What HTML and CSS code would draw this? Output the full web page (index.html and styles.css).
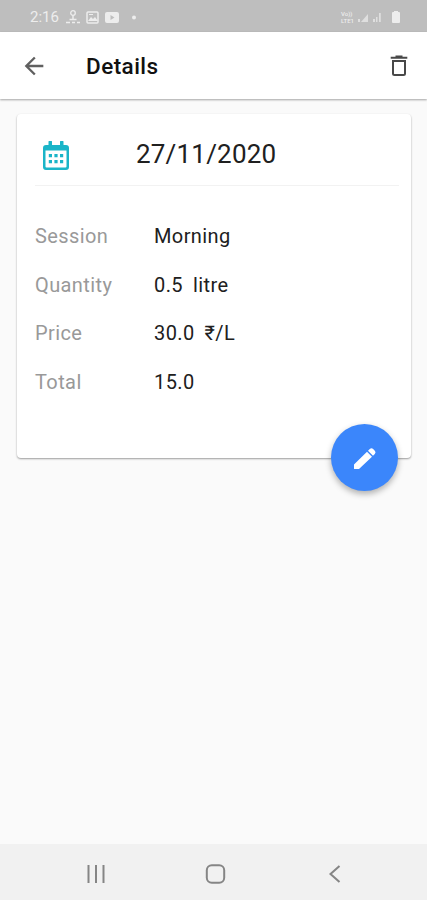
FILE: index.html
```html
<!DOCTYPE html>
<html lang="en">
<head>
<meta charset="utf-8">
<meta name="viewport" content="width=device-width, initial-scale=1">
<title>Details</title>
<link rel="stylesheet" href="styles.css">
</head>
<body>
<div class="screen">
  <header class="status">
    <span class="clock">2:16</span>
    <svg class="notices" width="76" height="16" viewBox="0 0 76 16" fill="none" stroke="currentColor">
      <circle cx="8" cy="4" r="2.3" stroke-width="1.3"/>
      <path d="M8 6.500v4M4.500 10.500h7M1 13.500h4M7 13.500h3M12 13.500h3" stroke-width="1.5"/>
      <rect x="22" y="3" width="11" height="11" rx="1" stroke-width="1.5"/>
      <path d="M23 12l3-4 2 2 2-2 3 4zM24 5h4v1h-4z" fill="currentColor" stroke="none"/>
      <path fill-rule="evenodd" d="M42 3h10q2 0 2 2v7q0 2-2 2h-10q-2 0-2-2v-7q0-2 2-2zM45.500 6v5l4-2.500z" fill="currentColor" stroke="none"/>
      <circle cx="69" cy="8.500" r="2" fill="currentColor" stroke="none"/>
    </svg>
    <span class="network"><span>Vo))</span><span>LTE1</span></span>
    <svg class="signals" width="46" height="16" viewBox="0 0 46 16" fill="currentColor">
      <path d="M1 13v-3h2v3zM4 13l7-8v8zM16 13v-3h2v3zM19 13V8h1.500v5zM22 13V4h1.800v9z" opacity=".7"/>
      <path d="M36 3h1V2h4v1h1q1 0 1 1v9q0 1-1 1h-6q-1 0-1-1V4q0-1 1-1z"/>
    </svg>
  </header>
  <div class="toolbar">
    <svg class="back" width="28" height="28" viewBox="0 0 24 24" fill="#606060"><path d="M20 11H7.830l5.590-5.590L12 4l-8 8 8 8 1.410-1.410L7.830 13H20z"/></svg>
    <h1>Details</h1>
    <svg class="trash" width="28" height="28" viewBox="0 0 28 28" fill="none" stroke="#484848" stroke-width="2">
      <path d="M5.700 5.800h16.600M10.500 4.600h7M8 9h12v12.500q0 1.500-1.500 1.500h-9Q8 23 8 21.500z"/>
    </svg>
  </div>
  <main>
    <section class="card">
      <div class="date-row">
        <svg class="calendar" width="28" height="32" viewBox="0 0 28 32" fill="#1ab5c8">
          <path fill-rule="evenodd" d="M6.500 1.500q0-.5.500-.5h2.500q.5 0 .5.500V5h8V1.500q0-.5.500-.5H21q.5 0 .5.500V5H24q3 0 3 3v19q0 3-3 3H4q-3 0-3-3V8q0-3 3-3h2.500zM3.500 10.500v16q0 1 1 1h19q1 0 1-1v-16z"/>
          <path d="M6.800 14h3.200v3.200H6.800zM12.400 14h3.200v3.200h-3.200zM18 14h3.200v3.200H18zM6.800 20h3.200v3.200H6.800zM12.400 20h3.200v3.200h-3.200zM18 20h3.200v3.200H18z"/>
        </svg>
        <span class="date">27/11/2020</span>
      </div>
      <dl>
        <dt>Session</dt><dd>Morning</dd>
        <dt>Quantity</dt><dd>0.5<span class="unit">litre</span></dd>
        <dt>Price</dt><dd>30.0<span class="unit">₹/L</span></dd>
        <dt>Total</dt><dd>15.0</dd>
      </dl>
      <button class="edit" aria-label="Edit">
        <svg width="28" height="28" viewBox="0 0 28 28" fill="#fff"><path d="M3 20.500L16 7.800l5 5L8 25H3.500Q3 25 3 24.500zM17 6.800l1.800-1.800q1.700-1.500 3.300 0l1.700 1.700q1.500 1.600 0 3.300L22 11.800z"/></svg>
      </button>
    </section>
  </main>
  <nav>
    <svg width="24" height="24" viewBox="0 0 24 24"><path d="M4.500 3v18M12 3v18M19.500 3v18"/></svg>
    <svg width="24" height="24" viewBox="0 0 24 24"><rect x="2.800" y="3.300" width="17.400" height="17.400" rx="5"/></svg>
    <svg width="24" height="24" viewBox="0 0 24 24"><path d="M16.500 4L7.500 12l9 8"/></svg>
  </nav>
</div>
</body>
</html>
```
FILE: styles.css
```css
* { box-sizing: border-box; }
body { margin: 0; font-family: Roboto, "Noto Sans", sans-serif; color: #202020; }
svg { display: block; flex: none; }
.screen { height: 900px; display: flex; flex-direction: column; background: #fafafa; overflow: hidden; }
.status { height: 32px; flex: none; display: flex; align-items: center; padding: 2px 24px 0 30px; background: #bebebe; color: #ededed; }
.clock { width: 30px; font-size: 15px; white-space: nowrap; }
.notices { margin-left: 5px; }
.network { margin-left: auto; margin-right: 3px; display: flex; flex-direction: column; font-size: 6px; line-height: 7px; font-weight: 500; }
.toolbar { height: 67px; flex: none; display: flex; align-items: center; padding: 0 14px 0 20px; background: #fff; box-shadow: 0 1px 2px rgba(0,0,0,.35); position: relative; }
h1 { margin: 0 0 0 38px; font-size: 22.5px; font-weight: 500; line-height: 28px; letter-spacing: .45px; color: #111; }
.trash { margin-left: auto; }
main { flex: 1; padding: 15px 16px 0 17px; }
.card { position: relative; height: 344px; padding-left: 18px; border-radius: 4px; background: #fff; box-shadow: 0 1px 2px rgba(0,0,0,.38); }
.date-row { height: 72px; margin-right: 12px; display: flex; align-items: center; border-bottom: 1px solid #f2f2f2; padding: 12px 0 0 7px; }
.calendar { margin-top: 1px; }
.date { margin: -4px 0 0 66px; font-size: 26px; line-height: 32px; letter-spacing: .2px; }
dl { margin: 26px 0 0; display: grid; grid-template-columns: 119px 1fr; grid-auto-rows: 48.5px; font-size: 20px; line-height: 48.5px; letter-spacing: .4px; }
dt { color: #999; }
dd { margin: 0; }
.unit { margin-left: 10px; }
.edit { position: absolute; right: 13px; bottom: -33px; width: 67px; height: 67px; padding: 0; border: 0; border-radius: 50%; background: #3b86fb; display: grid; place-items: center; box-shadow: 0 3px 6px rgba(0,0,0,.3); }
nav { height: 56px; flex: none; display: flex; justify-content: space-between; align-items: center; padding: 4px 80px 0 84px; background: #f1f1f1; }
nav svg { fill: none; stroke: #858585; stroke-width: 2; }
```
